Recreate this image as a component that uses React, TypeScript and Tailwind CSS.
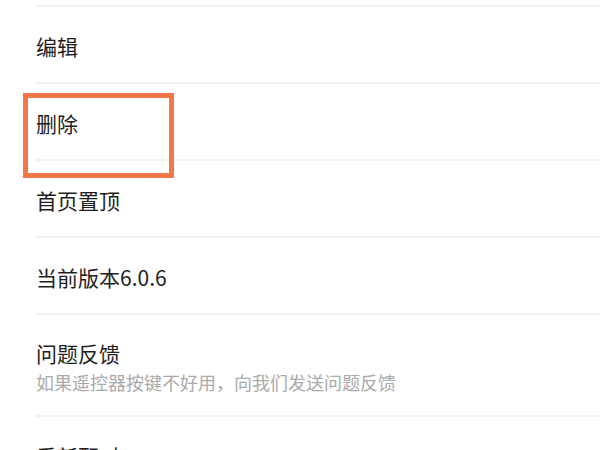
import React from 'react';

const FONT = { fontFamily: '"Noto Sans CJK SC", "Noto Sans", sans-serif' };

const items = [
	{ title: '编辑' },
	{ title: '删除' },
	{ title: '首页置顶' },
	{ title: '当前版本6.0.6' },
	{ title: '问题反馈', sub: '如果遥控器按键不好用，向我们发送问题反馈' },
	{ title: '重新配对' },
];

export default function App() {
	return (
		<div className="relative w-[600px] h-[450px] overflow-hidden bg-white" style={FONT}>
			<div className="pt-[5px] pl-[36px]">
				{items.map((item) => (
					<div
						key={item.title}
						className={`flex flex-col justify-center border-t-2 border-[#f1f1f1] ${
							item.sub ? 'h-[102px] pt-[4px]' : 'h-[77px] pt-[2px]'
						}`}
					>
						<div className="text-[21px] leading-[28px] text-[#1e1e1e]">{item.title}</div>
						{item.sub && (
							<div className="mt-[2px] text-[18px] leading-[26px] text-[#aaaaaa]">{item.sub}</div>
						)}
					</div>
				))}
			</div>
			<div className="absolute left-[23px] top-[93px] w-[151px] h-[85px] border-[5px] border-[#f5764a]" />
		</div>
	);
}
